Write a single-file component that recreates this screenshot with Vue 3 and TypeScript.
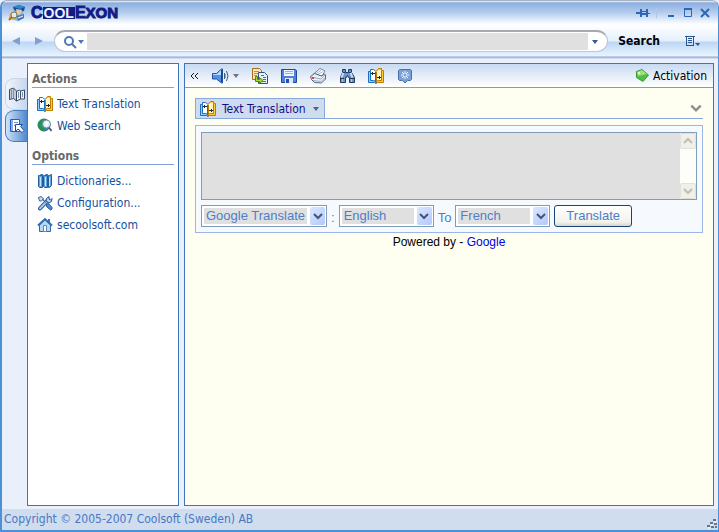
<script setup lang="ts">
import { ref } from 'vue'

interface Tool { id: string; label: string }
interface PanelLink { icon: string; text: string }
interface PanelGroup { title: string; links: PanelLink[] }

const query = ref('')
const source = ref('')
const engine = ref('Google Translate')
const from = ref('English')
const to = ref('French')

const groups: PanelGroup[] = [
  { title: 'Actions', links: [{ icon: 'book', text: 'Text Translation' }, { icon: 'web', text: 'Web Search' }] },
  {
    title: 'Options',
    links: [
      { icon: 'dict', text: 'Dictionaries...' },
      { icon: 'config', text: 'Configuration...' },
      { icon: 'home', text: 'secoolsoft.com' },
    ],
  },
]

const tools: Tool[] = [
  { id: 'copy', label: 'Copy' },
  { id: 'save', label: 'Save' },
  { id: 'print', label: 'Print' },
  { id: 'find', label: 'Find' },
  { id: 'book', label: 'Translate text' },
  { id: 'star', label: 'Add note' },
]
</script>

<template>
  <svg class="sprite" aria-hidden="true">
    <symbol id="i-logo" viewBox="0 0 18 18">
      <path d="M3 11 7 6l8 2 1 6-6 3-7-2z" fill="#7db4e2" />
      <path d="M5 3l6-2 6 2-1 4-6 1-4-2z" fill="#174f9c" />
      <path d="M5 3l6-2 6 2-5 2z" fill="#2d87c8" />
      <path d="M8 5l6 1-1 4-4 1z" fill="#e8c9a0" />
      <path d="M2 9l5 1 2 3-3 3-5-2z" fill="#e4aa48" />
      <circle cx="6" cy="11" r="3" fill="#d7eefa" stroke="#956b36" />
      <path d="M4 13l-3 3" stroke="#b16b20" stroke-width="2" />
      <path d="M9 12l7-2v4l-6 3z" fill="#3f79bf" /><path d="M10 14l5-2" stroke="#fff" />
    </symbol>
    <symbol id="i-book" viewBox="0 0 16 16">
      <path d="M8 3.5 10.500 .5h3v2h2v12h-6l-1.500 1z" fill="#ffcd32" stroke="#c07c00" />
      <path d="M8 3.500 5.500 1.500h-3v2h-2v11h6l1.500 1z" fill="#8fd0f6" stroke="#1d6fc0" />
      <path d="M3 2h2.500L8 4v9l-2-1H3z" fill="#fff" />
      <path d="M13 2h-2.500L8 4v9l2-1h3z" fill="#fff5c8" />
      <path d="M7.500 4v10" stroke="#1d6fc0" /><path d="M8.500 4v10" stroke="#c07c00" />
      <path d="M2.500 4v8.500h3l2 1" fill="none" stroke="#1d6fc0" />
      <path d="M13.500 3v9.500h-3l-2 1" fill="none" stroke="#c07c00" />
      <path d="M3 5.500h4M4.500 4v3M9 9.500h4M11.500 8v3" stroke="#262631" />
    </symbol>
    <symbol id="i-web" viewBox="0 0 16 16">
      <circle cx="7" cy="7" r="6" fill="#3f7fd0" stroke="#2b5e99" />
      <path d="M2 4c2-3 4-3 6-3L6 5 4 8l4 2-1 3C2 12 0 8 2 4z" fill="#1f9a3c" />
      <circle cx="9.500" cy="6" r="4" fill="#d8f0fc" stroke="#7c8b96" />
      <path d="M8 7l1-4 3 2-2 3z" fill="#fff" />
      <path d="M12 9.500l2.500 3.500" stroke="#53616b" stroke-width="2" />
    </symbol>
    <symbol id="i-dict" viewBox="0 0 16 16">
      <path d="M1.500 2.500h4v12h-3l-1-1zM6.500 2.500h4v12h-3l-1-1zM11.500 2.500h3v10l-2 2h-1z" fill="#62a5de" stroke="#245d96" />
      <path d="M3.500 4v9M8.500 4v9M12.500 4v9" stroke="#c4e5f8" />
      <path d="M1 3.500 4 1.500h2M6 3.500l3-2h2M11 3.500l3-2h1" fill="none" stroke="#347ab8" />
    </symbol>
    <symbol id="i-config" viewBox="0 0 16 16">
      <path d="M3 13.500 11 5" stroke="#244e85" stroke-width="4" stroke-linecap="round" />
      <path d="M3 13.500 11 5" stroke="#9bc8f1" stroke-width="2" stroke-linecap="round" />
      <path d="M9.500 3.500 12 1.500 12 4l1.500 1L15 3.500l-.5 3L12 8 9 6z" fill="#b4d6f5" stroke="#265287" />
      <path d="M1.500 2.500h3l4 5M9.500 9.500l2-1 3.500 4v1.500l-1.500 1-4-3.500z" fill="#4f8ddb" stroke="#265287" />
      <path d="M1.500 2.500 4 1.500l2.500 2-2 2.500h-2z" fill="#c2ddf4" stroke="#39669b" />
    </symbol>
    <symbol id="i-home" viewBox="0 0 16 16">
      <path d="M11 2h2v5h-2z" fill="#3777b5" />
      <path d="M2.500 8 8 3l5.500 5v6.500h-11z" fill="#b5d8f6" stroke="#326da7" />
      <path d="M1 8.500 8 2l7 6.500" fill="none" stroke="#2f70b4" stroke-width="2" />
      <path d="M6.500 8.500h3v6h-3z" fill="#fff" stroke="#5b8bbd" />
    </symbol>
    <symbol id="i-sound" viewBox="0 0 20 16">
      <path d="M1.500 5.500h4l5-4.500h1v14h-1l-5-4h-4z" fill="#4f93e6" stroke="#274e9c" />
      <path d="M2 6h4l4-4v5H2z" fill="#b5dcff" />
      <path d="M10 2h1v12h-1z" fill="#173f9a" />
      <path d="M13.500 5v6M15.500 3q3 5 0 10" fill="none" stroke="#3f5d82" />
      <path d="M14.500 6v4" stroke="#8fa5c0" />
    </symbol>
    <symbol id="i-copy" viewBox="0 0 16 16">
      <path d="M.5 .5h7l2 2v9h-9z" fill="#ffe9ad" stroke="#a8681c" />
      <path d="M2 3.500h5M2 5.500h5M2 7.500h3" stroke="#c98a3a" />
      <path d="M6.500 4.500h6l3 3v8h-9z" fill="#e4f2ff" stroke="#3c4a78" />
      <path d="M9 7.500h3M11 9.500h3M11 11.500h3M9 13.500h5" stroke="#4c6ea8" />
      <path d="M3.500 8.500h2v3h2v-2l3.500 3-3.500 3v-2h-4z" fill="#a6dc2a" stroke="#4b8a0c" />
    </symbol>
    <symbol id="i-save" viewBox="0 0 16 16">
      <path d="M.5 1.500h14l1 1v12h-15z" fill="#4f7fe0" stroke="#27459c" />
      <path d="M3 2h10v6H3z" fill="#eef5ff" /><path d="M4 3.500h8M4 5.500h8" stroke="#8fb2e6" />
      <path d="M4 10h8v5H4z" fill="#dde6f4" /><path d="M5 11h3v4H5z" fill="#2c4da8" />
    </symbol>
    <symbol id="i-print" viewBox="0 0 16 16">
      <path d="M3.500 6 10 .5l5 2.500-3 5z" fill="#fff" stroke="#70829e" />
      <path d="M6 5.500l5-3M8 6.500l5-3" stroke="#a8b8cd" />
      <path d="M.5 8.500 4.500 5.500l7 2.500L14.500 6l1 1v4l-4 4-7-.5-3-3z" fill="#e9f1fb" stroke="#51637d" />
      <path d="M1 9l10 2 4-4M3 12.500l8 1 4-4" fill="none" stroke="#9cadc4" />
      <path d="M2 10h2" stroke="#e8402a" stroke-width="2" />
    </symbol>
    <symbol id="i-find" viewBox="0 0 16 16">
      <path d="M3.500 1.500h3v3h3v-3h3v3l3 5v5h-5v-5h-1l-1-2-1 2h-1v5h-5v-5l2-5z" fill="#6795cf" stroke="#243955" />
      <path d="M4.500 4.500l-2 5M11.500 4.500l2 5" stroke="#c4e1ff" stroke-width="2" />
      <path d="M1 10.500h4M11 10.500h4M4 4.500h2M10 4.500h2" stroke="#263858" />
      <path d="M3.500 11v3M12.500 11v3" stroke="#a8cbf0" />
    </symbol>
    <symbol id="i-star" viewBox="0 0 16 16">
      <path d="M2.500 1.500h11l1 1v9l-1 1h-3L8 15l-2.500-2.500h-3l-1-1v-9z" fill="#7aa2d9" stroke="#4a70aa" />
      <path d="M8 3v8M4 7h8M5 4l6 6M11 4l-6 6" stroke="#f6faff" />
      <path d="M7 6h2v2H7z" fill="#7aa2d9" />
    </symbol>
    <symbol id="i-tag" viewBox="0 0 16 16">
      <path d="M2.500 3.500 8 1.500l6.500 5.500L9 13.500l-6.500-4z" fill="#4fc040" stroke="#3a9a38" />
      <path d="M3 4l5-2 5 4-9 2z" fill="#a1e080" /><circle cx="5" cy="5" r="1" fill="#fff" />
    </symbol>
    <symbol id="i-open" viewBox="0 0 16 16">
      <path d="M.5 3.500 4.500 2l3 3v10l-3-2.500-4 1z" fill="#c3ccd8" stroke="#364a64" />
      <path d="M7.500 5.500 10.500 4l1 1 4-1v9h-4l-4 2z" fill="#f0f5fb" stroke="#364a64" />
      <path d="M4.500 3v9M2.500 4v8M9.500 6v6M13.500 6v5" stroke="#7d90aa" />
      <path d="M11.500 5v8" stroke="#364a64" />
    </symbol>
    <symbol id="i-pointer" viewBox="0 0 16 16">
      <path d="M1.500 1.500h9v12h-9z" fill="#fff" stroke="#1d5fc4" />
      <path d="M3 1v13" stroke="#1d5fc4" />
      <path d="M5 4.500h4M5 7.500h2" stroke="#6396da" />
      <path d="M6.500 6.500h7l-2 2 3.500 4-2 2-4-3.500-2.500 2.500z" fill="#fff" stroke="#184d9e" />
    </symbol>
    <symbol id="i-down" viewBox="0 0 8 8"><path d="M1 2h6L4 6z" fill="currentColor" /></symbol>
    <symbol id="i-chevron" viewBox="0 0 12 12"><path d="M2 4l4 4 4-4" fill="none" stroke="currentColor" stroke-width="2" /></symbol>
  </svg>

  <div class="window">
    <header class="titlebar">
      <svg class="logo-icon"><use href="#i-logo" /></svg>
      <h1 class="brand">C<span class="inverse">OOL</span>E<span class="small">XON</span></h1>
      <div class="controls">
        <button type="button" aria-label="Pin" class="pin">
          <svg viewBox="0 0 14 10"><path d="M0 5h5M5 1v8M11 1v8" stroke="currentColor" stroke-width="2" /><path d="M6 3.500h4M6 6.500h4M6 5.500h8" stroke="currentColor" /></svg>
        </button>
        <button type="button" aria-label="Minimize"><svg viewBox="0 0 10 10"><path d="M2 8h6" stroke="currentColor" stroke-width="2" /></svg></button>
        <button type="button" aria-label="Maximize"><svg viewBox="0 0 10 10"><path d="M1.500 1.500h7v7h-7z" fill="none" stroke="currentColor" /><path d="M1 1h8" stroke="currentColor" stroke-width="2" /></svg></button>
        <button type="button" aria-label="Close"><svg viewBox="0 0 10 10"><path d="M1 1l8 8M9 1L1 9" stroke="currentColor" stroke-width="2" /></svg></button>
      </div>
    </header>

    <form class="searchbar" @submit.prevent>
      <button type="button" class="nav" aria-label="Back"><svg viewBox="0 0 8 8"><path d="M8 0v8L0 4z" fill="currentColor" /></svg></button>
      <button type="button" class="nav" aria-label="Forward"><svg viewBox="0 0 8 8"><path d="M0 0v8l8-4z" fill="currentColor" /></svg></button>
      <div class="search-pill">
        <button type="button" class="lens" aria-label="Search type">
          <svg class="glass" viewBox="0 0 14 14"><circle cx="6" cy="6" r="4" fill="none" stroke="#4e79b7" stroke-width="2" /><path d="M9 9l4 4" stroke="#4e79b7" stroke-width="2" /></svg>
          <svg class="tiny"><use href="#i-down" /></svg>
        </button>
        <input v-model="query" type="text" aria-label="Search text">
        <button type="button" class="history" aria-label="Search history"><svg class="tiny"><use href="#i-down" /></svg></button>
      </div>
      <button type="submit" class="search-button">Search</button>
      <button type="button" class="menu" aria-label="Menu">
        <svg viewBox="0 0 15 12"><path d="M0 1.500h10M1.500 1v10M8.500 1v10M1 10.500h8M3 3.500h4M3 5.500h4M3 7.500h4" fill="none" stroke="currentColor" /><path d="M10 8h5l-2 3z" fill="currentColor" /></svg>
      </button>
    </form>

    <main class="workspace">
      <nav class="rail" aria-label="Views">
        <button type="button" aria-label="Dictionary"><svg class="icon"><use href="#i-open" /></svg></button>
        <button type="button" class="active" aria-label="Actions"><svg class="icon"><use href="#i-pointer" /></svg></button>
      </nav>

      <aside class="panel">
        <section v-for="group in groups" :key="group.title" class="group">
          <h2>{{ group.title }}</h2>
          <ul>
            <li v-for="link in group.links" :key="link.text">
              <a href="#"><svg class="icon"><use :href="'#i-' + link.icon" /></svg>{{ link.text }}</a>
            </li>
          </ul>
        </section>
      </aside>

      <section class="content">
        <div class="toolbar">
          <button type="button" class="collapse" aria-label="Collapse panel"><svg viewBox="0 0 9 8"><path d="M4 1L1 4l3 3M8 1L5 4l3 3" fill="none" stroke="#16181d" /></svg></button>
          <button type="button" class="sound" aria-label="Pronounce"><svg class="speaker"><use href="#i-sound" /></svg><svg class="tiny"><use href="#i-down" /></svg></button>
          <button v-for="tool in tools" :key="tool.id" type="button" class="tool" :aria-label="tool.label"><svg class="icon"><use :href="'#i-' + tool.id" /></svg></button>
          <button type="button" class="activation"><svg class="icon"><use href="#i-tag" /></svg>Activation</button>
        </div>

        <div class="page">
          <div class="section-head">
            <button type="button" class="section-tab"><svg class="icon"><use href="#i-book" /></svg>Text Translation<svg class="tiny"><use href="#i-down" /></svg></button>
            <button type="button" class="fold" aria-label="Fold section"><svg><use href="#i-chevron" /></svg></button>
          </div>

          <form class="translator" @submit.prevent>
            <div class="source">
              <textarea v-model="source" aria-label="Text to translate"></textarea>
              <div class="scroll" aria-hidden="true">
                <span class="scroll-button up"><svg><use href="#i-chevron" /></svg></span>
                <span class="scroll-button"><svg><use href="#i-chevron" /></svg></span>
              </div>
            </div>
            <div class="options">
              <div class="combo engine">
                <select v-model="engine" aria-label="Translation service"><option>Google Translate</option></select>
                <span class="drop"><svg><use href="#i-chevron" /></svg></span>
              </div>
              <label for="from-language">:</label>
              <div class="combo">
                <select id="from-language" v-model="from"><option>English</option><option>French</option></select>
                <span class="drop"><svg><use href="#i-chevron" /></svg></span>
              </div>
              <label for="to-language">To</label>
              <div class="combo">
                <select id="to-language" v-model="to"><option>French</option><option>English</option></select>
                <span class="drop"><svg><use href="#i-chevron" /></svg></span>
              </div>
              <button type="submit" class="translate">Translate</button>
            </div>
          </form>
          <p class="powered">Powered by - <a href="#">Google</a></p>
        </div>
      </section>
    </main>

    <footer class="status">
      <span>Copyright © 2005-2007 Coolsoft (Sweden) AB</span>
      <svg class="grip" viewBox="0 0 10 10"><path d="M6 1h3M3 4h3M7 5h3M0 7h3M4 8h3M8 8h2" stroke="#65758c" stroke-width="2" /><path d="M7 3h2M4 6h2M1 9h2" stroke="#fff" /></svg>
    </footer>
  </div>
</template>

<style>
body { background: #e9f0fb; }
</style>

<style scoped>
* { box-sizing: border-box; }
button { border: 0; padding: 0; background: none; font: inherit; color: inherit; display: flex; align-items: center; }
svg { display: block; flex: none; }
.sprite { position: absolute; width: 0; height: 0; }
.icon { width: 16px; height: 16px; }
.tiny { width: 8px; height: 8px; }
.window {
  display: flex; flex-direction: column; min-height: 100vh;
  border: solid #4c91d7; border-width: 1px 1px 2px 2px; border-top-color: #a9b4c2;
  border-radius: 7px 7px 0 0; overflow: hidden; background: #e9f0fb;
  font: 12px/16px "DejaVu Sans Condensed", "DejaVu Sans", sans-serif;
}
.titlebar {
  display: flex; align-items: center; height: 24px; padding: 0 8px 0 6px; flex: none;
  background: linear-gradient(#eef4fd 0, #8caee0 2px, #b6ceef 12px, #f5f9ff 22px, #fff);
}
.logo-icon { width: 18px; height: 18px; }
.brand { display: flex; align-items: center; margin: 0 0 0 5px; font: bold 16px/12px "Liberation Sans", Arial, sans-serif; color: #121c85; -webkit-text-stroke: 1px #121c85; }
.inverse { font-size: 14px; line-height: 12px; color: #eaf2ff; background: #121c85; -webkit-text-stroke: 0; padding: 0 1px; }
.small { font-size: 15px; }
.controls { display: flex; align-items: center; gap: 7px; margin-left: auto; color: #2867bb; }
.controls svg { width: 10px; height: 10px; }
.controls .pin { padding-right: 6px; margin-right: 2px; border-right: 1px solid #b0c6e4; }
.controls .pin svg { width: 14px; }
.searchbar {
  display: flex; align-items: center; height: 34px; padding: 0 18px 2px 10px; flex: none;
  background: linear-gradient(#fff 0, #e4effc 16px, #bcd6f5 17px, #e9f4ff 31px, #8faacf 32px, #b6c9e5 33px, #e9f0fb);
}
.nav { color: #829fcb; margin-right: 15px; }
.nav svg { width: 8px; height: 8px; }
.nav + .search-pill { margin-left: -4px; }
.search-pill {
  flex: 1; display: flex; align-items: center; height: 22px; padding: 0 8px;
  background: #fff; border: 1px solid #bdc7d5; border-top: 2px solid #a6aaaf; border-radius: 11px;
}
.lens { gap: 0; margin-right: 2px; color: #4e79b7; }
.glass { width: 14px; height: 14px; }
.search-pill input { flex: 1; min-width: 0; height: 17px; border: 0; padding: 0; background: #e0e0e0; outline: 0; }
.history { margin-left: 3px; color: #305b98; }
.search-button { margin-left: 10px; font-weight: bold; color: #000; }
.menu { margin-left: 25px; color: #29548c; }
.menu svg { width: 15px; height: 12px; }
.workspace { flex: 1; display: flex; padding: 4px 4px 3px 3px; }
.rail { width: 22px; padding-top: 15px; flex: none; }
.rail button { width: 22px; height: 32px; padding-left: 3px; border: 1px solid #c5d4e9; border-right: 0; border-radius: 9px 0 0 9px; background: linear-gradient(90deg, #f1f6fd, #c5d6ee); }
.rail .active { border-color: #427dc3; background: linear-gradient(90deg, #d3e3f7, #4e88ce); }
.panel { width: 152px; flex: none; padding: 7px 4px; border: 1px solid #3f74b8; background: #fff; }
.group + .group { margin-top: 11px; }
h2 { margin: 0; border-bottom: 1px solid #82a2d7; font: bold 12px/16px "DejaVu Sans Condensed", "DejaVu Sans", sans-serif; color: #686868; }
ul { list-style: none; margin: 0; padding: 5px 0 0 5px; }
li a { display: flex; align-items: center; gap: 4px; height: 22px; color: #15509e; text-decoration: none; }
.content { flex: 1; min-width: 0; margin-left: 5px; display: flex; flex-direction: column; border: 1px solid #3f74b8; background: #fffff1; }
.toolbar { display: flex; align-items: center; height: 24px; padding: 0 6px 0 5px; border-bottom: 1px solid #8f9aa8; background: linear-gradient(#c8daf2, #fff); color: #000; }
.collapse svg { width: 9px; height: 8px; }
.sound { margin: 0 5px 0 12px; gap: 1px; color: #687884; }
.speaker { width: 20px; height: 16px; }
.tool { width: 29px; justify-content: center; }
.activation { gap: 3px; margin-left: auto; }
.page { padding: 10px 10px; }
.section-head { display: flex; align-items: center; justify-content: space-between; border-bottom: 1px solid #87a7df; }
.section-tab { height: 20px; gap: 6px; padding: 0 4px; border: 1px solid #87a7df; border-bottom: 0; background: #cedcee; color: #10108b; }
.section-tab .tiny { color: #46658c; }
.fold { color: #8c8c8c; }
.fold svg { width: 14px; height: 14px; }
.translator { margin-top: 6px; padding: 6px 5px 5px; border: 1px solid #9cb6e5; background: #f6f9fe; font: 13px/16px "Liberation Sans", Arial, sans-serif; color: #4c7fc8; }
.source { display: flex; height: 68px; border: 1px solid #7f9db9; background: #fff; }
textarea { flex: 1; min-width: 0; margin: 0; border: 0; padding: 2px; resize: none; outline: 0; background: #e0e0e0; }
.scroll { display: flex; flex-direction: column; justify-content: space-between; width: 16px; background: #fdfdf9; }
.scroll-button { display: grid; place-items: center; height: 16px; border: 1px solid #e2e1d8; border-radius: 2px; background: #f1f0e8; color: #bfbfb7; }
.scroll-button svg { width: 12px; height: 12px; }
.up svg { transform: rotate(180deg); }
.options { display: flex; align-items: center; gap: 4px; margin-top: 5px; }
.combo { display: grid; width: 95px; height: 22px; border: 1px solid #7f9db9; background: #fff; }
.engine { width: 126px; }
.combo select, .drop { grid-area: 1 / 1; }
select {
  appearance: none; border: 2px solid #fff; border-right-width: 19px; border-radius: 0; padding: 0 0 0 2px; margin: 0;
  background: #e0e0e0; color: inherit; font: inherit; outline: 0; min-width: 0;
}
.drop { justify-self: end; align-self: center; display: grid; place-items: center; width: 15px; height: 18px; margin-right: 1px; border-radius: 2px; background: linear-gradient(135deg, #dce7ff, #b2c9fa); color: #3e5680; pointer-events: none; }
.drop svg { width: 12px; height: 12px; stroke-width: 3px; }
.options label { padding-top: 4px; }
.translate { height: 22px; padding: 0 11px; border: 1px solid #174578; border-radius: 3px; background: linear-gradient(#fff, #f3f2ec 80%, #d9d5ca); color: inherit; }
.powered { margin: 1px 0 0; text-align: center; font: 12px/16px "Liberation Sans", Arial, sans-serif; color: #000; }
.powered a { color: #00e; text-decoration: none; }
.status { display: flex; align-items: center; justify-content: space-between; height: 21px; flex: none; padding: 0 1px 1px 2px; background: #cfddef; color: #4b77c3; }
.grip { width: 10px; height: 10px; align-self: flex-end; }
</style>
